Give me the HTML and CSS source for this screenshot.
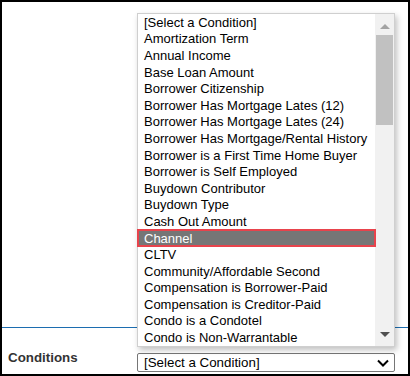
FILE: index.html
```html
<!DOCTYPE html>
<html>
<head>
<meta charset="utf-8">
<link rel="stylesheet" href="styles.css">
</head>
<body>
<div class="frame">
  <div class="spacer"></div>
  <div class="divider"></div>
  <div class="field-row">
    <label class="field-label">Conditions</label>
    <div class="select">
      <span class="select-text">[Select a Condition]</span>
      <svg class="chevron" width="12" height="8" viewBox="0 0 12 8"><path d="M1 1.5 L6 6.5 L11 1.5" fill="none" stroke="#000" stroke-width="2"/></svg>
    </div>
  </div>
  <div class="listbox">
    <ul class="options">
      <li class="option">[Select a Condition]</li>
      <li class="option">Amortization Term</li>
      <li class="option">Annual Income</li>
      <li class="option">Base Loan Amount</li>
      <li class="option">Borrower Citizenship</li>
      <li class="option">Borrower Has Mortgage Lates (12)</li>
      <li class="option">Borrower Has Mortgage Lates (24)</li>
      <li class="option">Borrower Has Mortgage/Rental History</li>
      <li class="option">Borrower is a First Time Home Buyer</li>
      <li class="option">Borrower is Self Employed</li>
      <li class="option">Buydown Contributor</li>
      <li class="option">Buydown Type</li>
      <li class="option">Cash Out Amount</li>
      <li class="option selected">Channel</li>
      <li class="option">CLTV</li>
      <li class="option">Community/Affordable Second</li>
      <li class="option">Compensation is Borrower-Paid</li>
      <li class="option">Compensation is Creditor-Paid</li>
      <li class="option">Condo is a Condotel</li>
      <li class="option">Condo is Non-Warrantable</li>
    </ul>
    <div class="scrollbar">
      <div class="arrow arrow-up"></div>
      <div class="track"><div class="thumb"></div></div>
      <div class="arrow arrow-down"></div>
    </div>
  </div>
</div>
</body>
</html>
```
FILE: styles.css
```css
html, body {
  margin: 0;
  padding: 0;
  background: #fff;
}
body {
  font-family: "Liberation Sans", Arial, sans-serif;
}
.frame {
  position: relative;
  box-sizing: border-box;
  width: 410px;
  height: 376px;
  border: 2px solid #000;
  background: #fff;
  display: flex;
  flex-direction: column;
}
.spacer {
  flex: 1;
}
.divider {
  height: 1px;
  background: #1c6db0;
}
.field-row {
  height: 46px;
  display: flex;
  align-items: flex-start;
  padding: 25px 0 0 6px;
  box-sizing: border-box;
}
.field-label {
  width: 129px;
  font-size: 13.33px;
  font-weight: bold;
  color: #333;
  line-height: 15px;
  margin-top: -3px;
}
.select {
  box-sizing: border-box;
  width: 258px;
  height: 19px;
  border: 1px solid #767676;
  border-radius: 2px;
  display: flex;
  align-items: center;
  justify-content: space-between;
  padding: 0 5px 0 6px;
}
.select-text {
  font-size: 13.33px;
  color: #000;
  line-height: 17px;
}
.chevron {
  display: block;
}
.listbox {
  position: absolute;
  left: 135px;
  top: 11px;
  width: 258px;
  height: 334px;
  box-sizing: border-box;
  border: 1px solid #cfcfcf;
  background: #fff;
  box-shadow: 2px 3px 6px rgba(0,0,0,0.25);
  display: flex;
}
.options {
  list-style: none;
  margin: 0;
  padding: 0;
  flex: 1;
  display: flex;
  flex-direction: column;
}
.option {
  flex: 1;
  display: flex;
  align-items: center;
  padding-left: 6px;
  font-size: 13px;
  color: #000;
  white-space: nowrap;
}
.option.selected {
  background: #767676;
  color: #fff;
  outline: 2px solid #e8434c;
  outline-offset: -1px;
  position: relative;
}
.scrollbar {
  width: 19px;
  background: #f1f1f1;
  display: flex;
  flex-direction: column;
  align-items: center;
}
.arrow {
  width: 0;
  height: 0;
  border-left: 5px solid transparent;
  border-right: 5px solid transparent;
}
.arrow-up {
  margin-top: 10px;
  border-bottom: 5px solid #a3a3a3;
}
.arrow-down {
  margin-bottom: 9px;
  border-top: 5px solid #505050;
}
.track {
  flex: 1;
  width: 100%;
  padding: 6px 1px 0 1px;
  box-sizing: border-box;
}
.thumb {
  height: 90px;
  background: #c1c1c1;
}
```
